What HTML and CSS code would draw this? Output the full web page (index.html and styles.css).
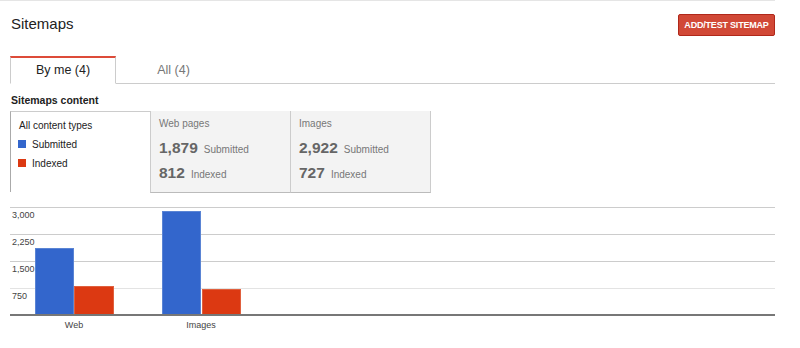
FILE: index.html
```html
<!DOCTYPE html>
<html lang="en">
<head>
    <meta charset="UTF-8">
    <meta name="viewport" content="width=device-width, initial-scale=1.0">
    <title>Sitemaps</title>
    <link rel="stylesheet" href="styles.css">
</head>
<body>
    <div class="page">
        <div class="header">
            <h1 class="title">Sitemaps</h1>
            <button class="add-btn">ADD/TEST SITEMAP</button>
        </div>

        <div class="tabs">
            <div class="tab active">By me (4)</div>
            <div class="tab wide">All (4)</div>
        </div>

        <h2 class="section-title">Sitemaps content</h2>

        <div class="boxes">
            <div class="box legend">
                <div class="legend-row">All content types</div>
                <div class="legend-row"><span class="swatch blue"></span>Submitted</div>
                <div class="legend-row"><span class="swatch red"></span>Indexed</div>
            </div>
            <div class="box stat">
                <div class="stat-title">Web pages</div>
                <div class="stat-row"><span class="num">1,879</span><span class="lbl">Submitted</span></div>
                <div class="stat-row"><span class="num">812</span><span class="lbl">Indexed</span></div>
            </div>
            <div class="box stat last">
                <div class="stat-title">Images</div>
                <div class="stat-row"><span class="num">2,922</span><span class="lbl">Submitted</span></div>
                <div class="stat-row"><span class="num">727</span><span class="lbl">Indexed</span></div>
            </div>
        </div>

        <!-- column chart: baseline y=115, 3,000 = 108px -->
        <svg class="chart" width="765" height="140" viewBox="0 0 765 140">
            <line class="grid" x1="0" y1="7.5" x2="765" y2="7.5"/>
            <line class="grid" x1="0" y1="34.5" x2="765" y2="34.5"/>
            <line class="grid" x1="0" y1="61.5" x2="765" y2="61.5"/>
            <line class="grid light" x1="0" y1="88.5" x2="765" y2="88.5"/>

            <text class="axis" x="2" y="18">3,000</text>
            <text class="axis" x="2" y="45">2,250</text>
            <text class="axis" x="2" y="72">1,500</text>
            <text class="axis" x="2" y="99">750</text>

            <rect class="bar blue" x="25.5" y="48.5" width="38" height="66"/>
            <rect class="bar red" x="64.5" y="86.5" width="39" height="28"/>
            <rect class="bar blue" x="152.5" y="11.5" width="38" height="103"/>
            <rect class="bar red" x="192.5" y="89.5" width="38" height="25"/>

            <line class="base" x1="0" y1="115" x2="765" y2="115"/>

            <text class="axis mid" x="64" y="128">Web</text>
            <text class="axis mid" x="191" y="128">Images</text>
        </svg>
    </div>
</body>
</html>
```

FILE: styles.css
```css
body {
    margin: 0;
    font-family: "Liberation Sans", Arial, sans-serif;
    color: #222;
}
.page {
    width: 765px;
    padding-left: 10px;
    border-top: 1px solid #e5e5e5;
}
.header {
    display: flex;
    justify-content: space-between;
    align-items: flex-start;
    padding-top: 13px;
}
.title {
    margin: 1px 0 0 1px;
    font-size: 15px;
    font-weight: normal;
    line-height: 17px;
}
.add-btn {
    box-sizing: border-box;
    width: 97px;
    height: 22px;
    padding: 0;
    border: 1px solid #b0281a;
    border-radius: 2px;
    background: #d14836;
    color: #fff;
    font-family: "Liberation Sans", Arial, sans-serif;
    font-size: 9px;
    font-weight: bold;
    letter-spacing: -0.2px;
    cursor: pointer;
}
.tabs {
    display: flex;
    align-items: flex-start;
    height: 27px;
    margin-top: 20px;
    border-bottom: 1px solid #ccc;
}
.tab {
    box-sizing: border-box;
    width: 106px;
    height: 27px;
    padding-top: 2px;
    line-height: 25px;
    font-size: 12.5px;
    text-align: center;
    color: #777;
}
.tab.wide {
    width: 115px;
}
.tab.active {
    height: 28px;
    padding-top: 0;
    margin-bottom: -1px;
    border: 1px solid #ccc;
    border-top: 2px solid #dd4b39;
    border-bottom-color: #fff;
    background: #fff;
    color: #222;
}
.section-title {
    margin: 10px 0 5px 1px;
    font-size: 10.5px;
    line-height: 12px;
    font-weight: bold;
}
.boxes {
    display: flex;
    align-items: flex-start;
}
.box {
    box-sizing: border-box;
    width: 140px;
    font-size: 10px;
}
.legend {
    height: 81px;
    padding: 4px 0 0 8px;
    border-top: 1px solid #ccc;
    border-left: 1px solid #aaa;
}
.legend-row {
    line-height: 19px;
}
.swatch {
    display: inline-block;
    width: 8px;
    height: 8px;
    margin: 0 6px 0 -1px;
}
.blue {
    background: #3366cc;
}
.red {
    background: #dc3912;
}
.stat {
    height: 82px;
    padding: 7px 0 0 8px;
    background: #f3f3f3;
    border-left: 1px solid #ccc;
    border-bottom: 1px solid #bbb;
    color: #777;
}
.stat.last {
    width: 141px;
    border-right: 1px solid #ccc;
}
.stat-title {
    line-height: 12px;
    margin-bottom: 5px;
}
.stat-row {
    font-size: 15.5px;
    line-height: 25px;
}
.num {
    font-weight: bold;
    color: #666;
}
.lbl {
    margin-left: 6px;
    font-size: 10px;
    line-height: 10px;
}
.chart {
    display: block;
    margin-top: 7px;
}
.grid {
    stroke: #ccc;
    stroke-width: 1;
}
.grid.light {
    stroke: #e3e3e3;
}
.base {
    stroke: #777;
    stroke-width: 2;
}
.bar.blue {
    fill: #3366cc;
    stroke: #5a84d4;
}
.bar.red {
    fill: #dc3912;
    stroke: #e0603e;
}
.axis {
    font-family: "Liberation Sans", Arial, sans-serif;
    font-size: 9px;
    fill: #444;
}
.axis.mid {
    text-anchor: middle;
}
```
